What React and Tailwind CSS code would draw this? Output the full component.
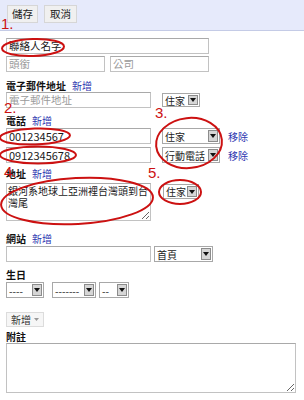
import React from 'react';

const font = { fontFamily: '"Noto Sans CJK TC", "Liberation Sans", sans-serif' };

const Arrow = () => (
    <span className="my-[1px] mr-[1px] w-[10px] shrink-0 flex items-center justify-center border border-[#8c8c8c] bg-[#d6d6d6]">
        <svg width="6" height="4" viewBox="0 0 6 4">
            <path d="M0 0 L6 0 L3 4 Z" fill="#111" />
        </svg>
    </span>
);

const Select = ({ label, className }) => (
    <div className={`flex items-stretch border border-[#a8a8a8] bg-white ${className}`}>
        <span className="flex-1 flex items-center pl-[2px] text-[10px] text-[#222] whitespace-nowrap">{label}</span>
        <Arrow />
    </div>
);

const Input = ({ className, children, muted }) => (
    <div className={`flex items-center border border-[#c2c2c2] border-t-[#a9a9a9] bg-white pl-[2px] text-[10.5px] whitespace-nowrap ${muted ? 'text-[#9a9a9a]' : 'text-[#1a1a1a]'} ${className}`}>
        {children}
    </div>
);

const Label = ({ title, add, className }) => (
    <div className={`flex items-center h-[12px] text-[10px] leading-[12px] ${className}`}>
        <span className="font-bold text-[#111]">{title}</span>
        {add && <span className="ml-[6px] text-[#2b35b0]">新增</span>}
    </div>
);

const Num = ({ children, className }) => (
    <span className={`absolute text-[15px] leading-[18px] text-[#cc1111] ${className}`} style={{ fontFamily: '"Liberation Sans", sans-serif' }}>
        {children}
    </span>
);

const App = () => {
    return (
        <div className="relative w-[304px] h-[400px] overflow-hidden bg-white" style={font}>
            {/* toolbar */}
            <div className="h-[31px] bg-[#e6eafb] border-b border-[#c4cbe6] flex items-start pt-[5px] pl-[7px] gap-[6px]">
                <button className="h-[18px] px-[4px] bg-[#f0f0f0] border border-[#d6d6d6] text-[10.5px] text-[#222]">儲存</button>
                <button className="h-[18px] px-[5px] bg-[#f0f0f0] border border-[#d6d6d6] text-[10.5px] text-[#222]">取消</button>
            </div>

            <div className="pl-[6px] flex flex-col">
                <Input className="mt-[7px] h-[16px] w-[203px]">聯絡人名字</Input>
                <div className="mt-[2px] flex gap-[5px]">
                    <Input muted className="h-[16px] w-[99px]">頭銜</Input>
                    <Input muted className="h-[16px] w-[99px]">公司</Input>
                </div>

                <Label title="電子郵件地址" add className="mt-[8px]" />
                <div className="flex items-center gap-[11px]">
                    <Input muted className="h-[16px] w-[145px]">電子郵件地址</Input>
                    <Select label="住家" className="h-[14px] w-[38px]" />
                </div>

                <Label title="電話" add className="mt-[7px]" />
                <div className="mt-[1px] flex items-center">
                    <Input className="h-[16px] w-[145px] text-[11px]">001234567</Input>
                    <Select label="住家" className="ml-[11px] h-[16px] w-[58px]" />
                    <span className="ml-[8px] text-[10px] text-[#2b35b0]">移除</span>
                </div>
                <div className="mt-[3px] flex items-center">
                    <Input className="h-[16px] w-[145px] text-[11px]">0912345678</Input>
                    <Select label="行動電話" className="ml-[11px] h-[16px] w-[58px]" />
                    <span className="ml-[8px] text-[10px] text-[#2b35b0]">移除</span>
                </div>

                <Label title="地址" add className="mt-[5px]" />
                <div className="mt-[3px] flex items-start gap-[12px]">
                    <textarea
                        readOnly
                        className="h-[38px] w-[145px] resize border border-[#c2c2c2] border-t-[#a9a9a9] px-[1px] py-[1px] text-[10px] leading-[12px] text-[#1a1a1a] outline-none"
                        style={font}
                        value="銀河系地球上亞洲裡台灣頭到台灣尾"
                    />
                    <Select label="住家" className="mt-[1px] h-[15px] w-[36px]" />
                </div>

                <Label title="網站" add className="mt-[12px]" />
                <div className="mt-[1px] flex items-center gap-[3px]">
                    <Input className="h-[16px] w-[145px]"></Input>
                    <Select label="首頁" className="h-[16px] w-[59px]" />
                </div>

                <Label title="生日" className="mt-[7px]" />
                <div className="mt-[1px] flex items-center">
                    <Select label="----" className="h-[16px] w-[38px]" />
                    <Select label="-------" className="ml-[8px] h-[16px] w-[44px]" />
                    <Select label="--" className="ml-[3px] h-[16px] w-[30px]" />
                </div>

                <button className="mt-[14px] h-[15px] w-[38px] flex items-center justify-center gap-[3px] bg-[#f6f6f6] border border-[#dcdcdc] text-[10px] text-[#333]">
                    新增
                    <svg width="5" height="3" viewBox="0 0 5 3"><path d="M0 0 L5 0 L2.5 3 Z" fill="#999" /></svg>
                </button>

                <Label title="附註" className="mt-[4px]" />
                <textarea
                    readOnly
                    className="h-[50px] w-[290px] resize border border-[#c2c2c2] border-t-[#a9a9a9] outline-none"
                />
            </div>

            {/* red annotations */}
            <svg className="absolute top-0 left-0 pointer-events-none" width="304" height="400" viewBox="0 0 304 400" fill="none" stroke="#cc1111" strokeWidth="2">
                <ellipse cx="33" cy="47.5" rx="31" ry="8.5" transform="rotate(-2 33 47.5)" />
                <ellipse cx="35" cy="136.5" rx="35" ry="8" transform="rotate(-2 35 136.5)" />
                <ellipse cx="38" cy="155" rx="38" ry="8.5" />
                <ellipse cx="189" cy="143" rx="33" ry="25" transform="rotate(-6 189 143)" />
                <ellipse cx="77" cy="201" rx="76" ry="23" transform="rotate(-3 77 201)" />
                <ellipse cx="180" cy="192" rx="21" ry="12" />
            </svg>
            <Num className="left-[1px] top-[15px]">1.</Num>
            <Num className="left-[4px] top-[99px]">2.</Num>
            <Num className="left-[155px] top-[104px]">3.</Num>
            <Num className="left-[4px] top-[163px]">4.</Num>
            <Num className="left-[148px] top-[164px]">5.</Num>
        </div>
    );
};

export default App;
